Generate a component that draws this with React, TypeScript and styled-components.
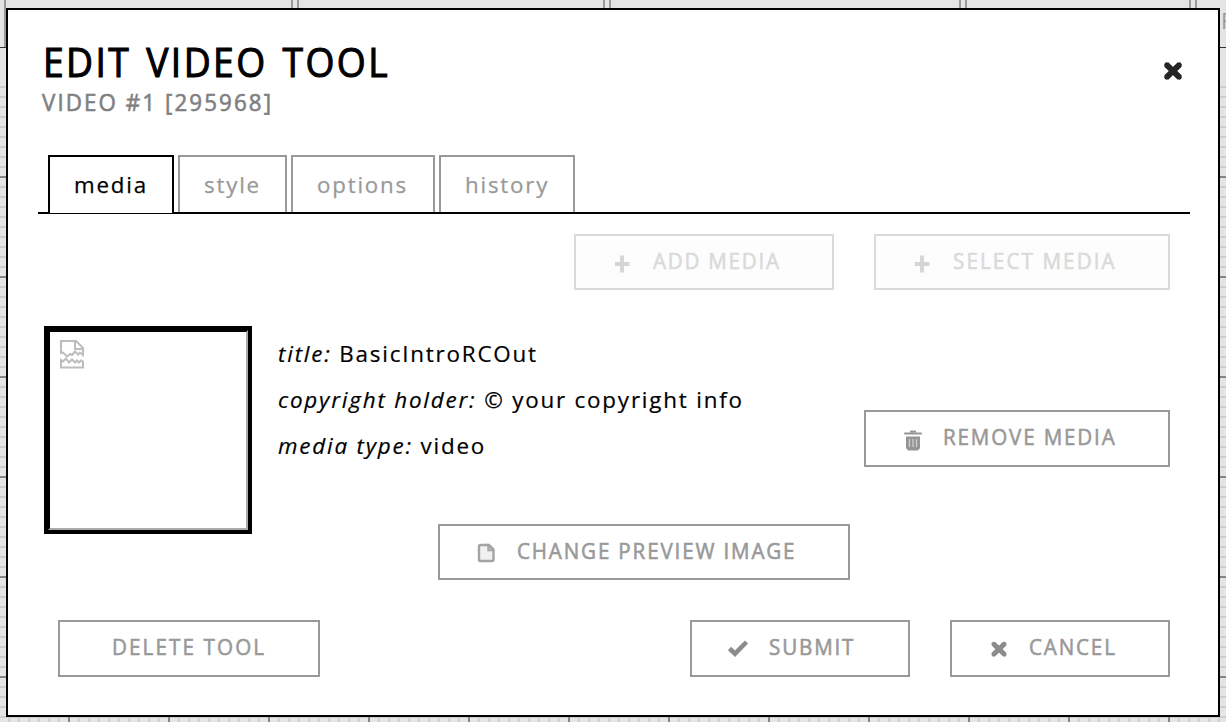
import React from "react";
import styled, { createGlobalStyle, css } from "styled-components";

const GlobalStyle = createGlobalStyle`
  * { box-sizing: border-box; }
  html, body { margin: 0; padding: 0; }
  body { overflow: hidden; background: #e5e5e5; font-family: "Open Sans", "Noto Sans", sans-serif; }
`;

const Workspace = styled.div`
  position: relative;
  width: 1226px;
  height: 722px;
  overflow: hidden;
  padding: 8px 6px 5px;
  background-color: #e5e5e5;
  background-image:
    linear-gradient(#858585 2px, transparent 2px),
    linear-gradient(90deg, #858585 2px, transparent 2px),
    linear-gradient(#cdcdcd 2px, transparent 2px),
    linear-gradient(90deg, #d0d0d0 2px, transparent 2px);
  background-size: 100px 100px, 100px 100px, 10px 10px, 10px 10px;
  background-position: 0 76px, 68px 0, 0 6px, 8px 0;
`;

const TopBar = styled.div`
  position: absolute;
  inset: 0 0 auto 0;
  height: 86px;
  background: #e4e4e4;
`;

const BarRow = styled.div`
  display: flex;
  height: 48px;
  border-bottom: 1px solid #333;
`;

const BarCell = styled.div<{ $w: number; $first?: boolean }>`
  flex: none;
  width: ${(p) => p.$w}px;
  margin-left: ${(p) => (p.$first ? 4 : 0)}px;
  margin-right: 4px;
  border: solid #999;
  border-width: 0 2px;
  padding: 5px 0 0 24px;
  color: #999;
  font-size: 22px;
`;

const Dialog = styled.section`
  position: relative;
  width: 1214px;
  height: 709px;
  border: 2px solid #000;
  background: #fff;
  padding: 0 28px 0 30px;
  display: flex;
  flex-direction: column;
`;

const Header = styled.header`
  display: flex;
  justify-content: space-between;
  height: 145px;
  padding: 24px 6px 0 4px;
`;

const Title = styled.h1`
  margin: 0 0 0 1px;
  font-size: 40px;
  line-height: 56px;
  font-weight: 400;
  letter-spacing: 2.6px;
  word-spacing: 3.2px;
  white-space: nowrap;
  transform: scaleX(0.93);
  transform-origin: 0 0;
  -webkit-text-stroke: 1.1px #000;
`;

const Subtitle = styled.h2`
  margin: -3px 0 0;
  font-size: 23.5px;
  line-height: 30px;
  font-weight: 400;
  letter-spacing: 2.2px;
  color: #808080;
  white-space: nowrap;
  transform: scaleX(0.95);
  transform-origin: 0 0;
  -webkit-text-stroke: 0.6px #808080;
`;

const CloseButton = styled.button`
  border: 0;
  padding: 0;
  background: none;
  width: 22px;
  height: 22px;
  margin-top: 26px;
`;

const Tabs = styled.nav`
  display: flex;
  gap: 4px;
  height: 59px;
  padding-left: 10px;
  border-bottom: 2px solid #000;
`;

const Tab = styled.button<{ $active?: boolean; $w: number }>`
  width: ${(p) => p.$w}px;
  height: ${(p) => (p.$active ? 58 : 57)}px;
  border: 2px solid ${(p) => (p.$active ? "#000" : "#999")};
  border-bottom: 0;
  background: #fff;
  color: ${(p) => (p.$active ? "#000" : "#999")};
  font: 22.3px/54px "Open Sans", sans-serif;
  letter-spacing: 1.8px;
  padding: 1px 0 ${(p) => (p.$active ? 1 : 0)}px 24px;
  text-align: left;
  -webkit-text-stroke: 0.25px;
`;

const MediaActions = styled.div`
  display: flex;
  justify-content: flex-end;
  gap: 40px;
  padding: 20px 20px 0 0;
`;

const ActionButton = styled.button<{ $w: number; $h?: number; $pad?: number; $disabled?: boolean }>`
  display: flex;
  align-items: center;
  flex: none;
  width: ${(p) => p.$w}px;
  height: ${(p) => p.$h ?? 57}px;
  padding: 0 0 0 ${(p) => p.$pad ?? 35}px;
  border: 2px solid #999;
  background: #fff;
  color: #999;
  font: 400 22.4px/30px "Open Sans", sans-serif;
  white-space: nowrap;
  ${(p) => p.$disabled && css`
    border-color: #dadada;
    color: #dadada;
    background: #fdfdfd;
  `}
`;

const Label = styled.span<{ $ls?: number }>`
  display: block;
  margin-bottom: 3px;
  letter-spacing: ${(p) => p.$ls ?? 2}px;
  transform: scaleX(0.92);
  transform-origin: 0 0;
  -webkit-text-stroke: 0.6px;
`;

const IconSlot = styled.span`
  flex: none;
  display: flex;
  width: 24px;
  height: 24px;
  margin: 2px 17.5px 0 0;
`;

const MediaRow = styled.div`
  display: flex;
  height: 208px;
  margin-top: 36px;
  padding: 0 20px 0 6px;
`;

const PreviewFrame = styled.div`
  flex: none;
  width: 208px;
  height: 208px;
  border: 4px solid #000;
`;

const Preview = styled.div`
  height: 200px;
  border: 2px solid;
  border-color: #000 #aaa #aaa #000;
  padding: 7px 9px;
`;

const Details = styled.div`
  flex: 1;
  padding: 5px 0 0 26px;
`;

const Detail = styled.p`
  margin: 0;
  font-size: 22.4px;
  line-height: 46px;
  letter-spacing: 1.8px;
  white-space: nowrap;
  -webkit-text-stroke: 0.2px;
`;

const RemoveWrap = styled.div`
  padding-top: 84px;
`;

const PreviewActions = styled.div`
  margin: -10px 0 0 400px;
`;

const Footer = styled.footer`
  display: flex;
  margin-top: 40px;
  padding: 0 20px;
  gap: 40px;
`;

const Spacer = styled.div`
  flex: 1;
`;

const Cross = ({ size, color, box = "0 0 22 22" }: { size: number; color: string; box?: string }) => (
  <svg width={size} height={size} viewBox={box}>
    <path d="M4.200 4.400 17.800 17.600M17.800 4.400 4.200 17.600" stroke={color} strokeWidth="5.800" strokeLinecap="butt" />
    <path d="M4.600 4.800 17.400 17.200M17.400 4.800 4.600 17.200" stroke={color} strokeWidth="4.800" strokeLinecap="round" />
  </svg>
);

const Plus = () => (
  <svg width="24" height="24" viewBox="0 0 24 24">
    <path d="M11 4.500v17M4 13h14.500" stroke="#d6d6d6" strokeWidth="4" />
  </svg>
);

const Trash = () => (
  <svg width="24" height="24" viewBox="0 0 24 24">
    <path d="M4 5.500h16" stroke="#959595" strokeWidth="2" strokeLinecap="round" />
    <path d="M9 3.600h6" stroke="#959595" strokeWidth="2" />
    <path d="M5 8.500h14V20l-2 2.500H7L5 20z" fill="#959595" />
    <path d="M8.500 11v8M12 11v8M15.500 11v8" stroke="#d0d0d0" strokeWidth="1.300" />
  </svg>
);

const Page = () => (
  <svg width="24" height="24" viewBox="0 0 24 24">
    <path d="M5.500 4h8.500l4.500 4.500V18.500q0 1.500-1.500 1.500h-11.500Q4 20 4 18.500V5.500q0-1.500 1.500-1.500z" fill="#f1f1f1" stroke="#a3a3a3" strokeWidth="2.400" />
    <path d="M13 4V9.500H18.500z" fill="#bbb" stroke="#a3a3a3" strokeWidth="1.500" />
  </svg>
);

const Check = () => (
  <svg width="24" height="24" viewBox="0 0 24 24">
    <path d="m2.500 10.500 5.500 5.200L19.500 4" fill="none" stroke="#8d8b8e" strokeWidth="4.600" />
  </svg>
);

const BrokenImage = () => (
  <svg width="26" height="30" viewBox="0 0 26 30" fill="none" stroke="#bdbdbd" strokeWidth="2">
    <path d="M2 14V2h15l7 7v7l-3-2.500-2 2-3-3-3 3.500-2-1-3 2.500-4-4z" />
    <path d="M16 2v8h8" />
    <path d="M2 21l2 1.500 3-3 3 4 3-3 3 3 2-2 2 2 2-2 2 1v6H2z" />
  </svg>
);

export default function App() {
  return (
    <Workspace>
      <GlobalStyle />
      <TopBar>
        <BarRow>
          <BarCell $w={289} $first />
          <BarCell $w={308} />
          <BarCell $w={352} />
          <BarCell $w={226} />
          <BarCell $w={200}>F</BarCell>
        </BarRow>
      </TopBar>
      <Dialog>
        <Header>
          <div>
            <Title>EDIT VIDEO TOOL</Title>
            <Subtitle>VIDEO #1 [295968]</Subtitle>
          </div>
          <CloseButton aria-label="Close"><Cross size={22} color="#252427" /></CloseButton>
        </Header>
        <Tabs>
          <Tab $active $w={126}>media</Tab>
          <Tab $w={109}>style</Tab>
          <Tab $w={144}>options</Tab>
          <Tab $w={136}>history</Tab>
        </Tabs>
        <MediaActions>
          <ActionButton $w={260} $h={56} $disabled><IconSlot><Plus /></IconSlot><Label $ls={1.9}>ADD MEDIA</Label></ActionButton>
          <ActionButton $w={296} $h={56} $disabled><IconSlot><Plus /></IconSlot><Label $ls={2.3}>SELECT MEDIA</Label></ActionButton>
        </MediaActions>
        <MediaRow>
          <PreviewFrame><Preview><BrokenImage /></Preview></PreviewFrame>
          <Details>
            <Detail><em>title:</em> BasicIntroRCOut</Detail>
            <Detail><em>copyright holder:</em> © your copyright info</Detail>
            <Detail><em>media type:</em> video</Detail>
          </Details>
          <RemoveWrap>
            <ActionButton $w={306}><IconSlot><Trash /></IconSlot><Label>REMOVE MEDIA</Label></ActionButton>
          </RemoveWrap>
        </MediaRow>
        <PreviewActions>
          <ActionButton $w={412} $h={56}><IconSlot><Page /></IconSlot><Label>CHANGE PREVIEW IMAGE</Label></ActionButton>
        </PreviewActions>
        <Footer>
          <ActionButton $w={262} $pad={52}><Label $ls={2.3}>DELETE TOOL</Label></ActionButton>
          <Spacer />
          <ActionButton $w={220}><IconSlot><Check /></IconSlot><Label>SUBMIT</Label></ActionButton>
          <ActionButton $w={220}><IconSlot><Cross size={24} color="#8d8b8e" box="-3 -2 28 28" /></IconSlot><Label>CANCEL</Label></ActionButton>
        </Footer>
      </Dialog>
    </Workspace>
  );
}
